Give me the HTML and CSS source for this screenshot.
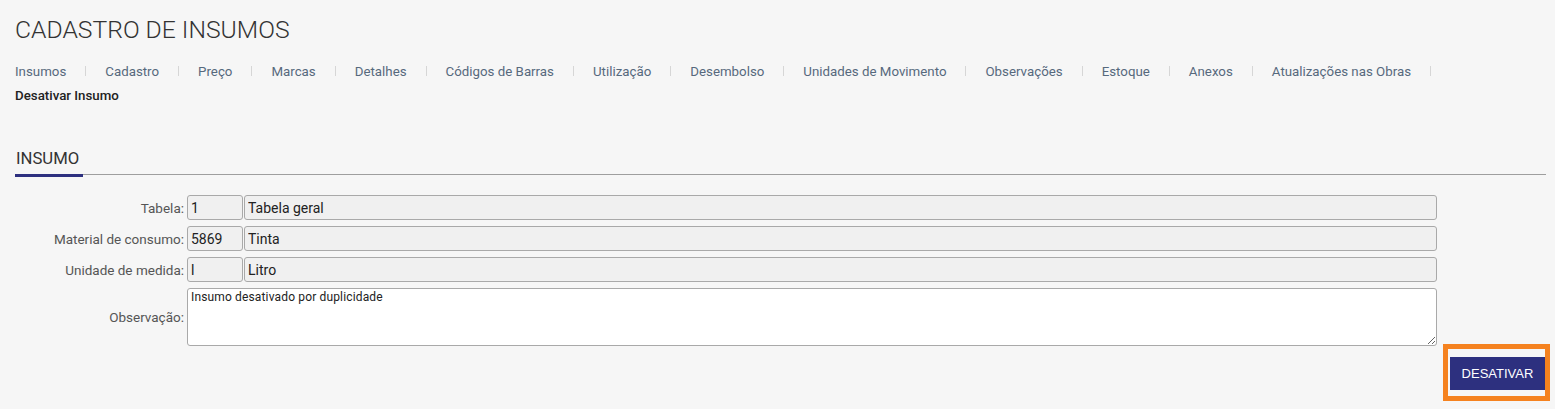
FILE: index.html
```html
<!DOCTYPE html>
<html lang="pt-BR">
<head>
<meta charset="utf-8">
<title>Cadastro de Insumos</title>
<link rel="stylesheet" href="styles.css">
</head>
<body>
<div class="page">
  <h1 class="title">CADASTRO DE INSUMOS</h1>
  <nav class="nav">
    <a class="nav-item">Insumos</a>
    <a class="nav-item">Cadastro</a>
    <a class="nav-item">Preço</a>
    <a class="nav-item">Marcas</a>
    <a class="nav-item">Detalhes</a>
    <a class="nav-item">Códigos de Barras</a>
    <a class="nav-item">Utilização</a>
    <a class="nav-item">Desembolso</a>
    <a class="nav-item">Unidades de Movimento</a>
    <a class="nav-item">Observações</a>
    <a class="nav-item">Estoque</a>
    <a class="nav-item">Anexos</a>
    <a class="nav-item">Atualizações nas Obras</a>
    <a class="nav-item active">Desativar Insumo</a>
  </nav>

  <div class="tabs">
    <div class="tab">INSUMO</div>
  </div>

  <form class="form">
    <label class="label">Tabela:</label>
    <div class="field">
      <input class="input code" value="1" readonly>
      <input class="input desc" value="Tabela geral" readonly>
    </div>

    <label class="label">Material de consumo:</label>
    <div class="field">
      <input class="input code" value="5869" readonly>
      <input class="input desc" value="Tinta" readonly>
    </div>

    <label class="label">Unidade de medida:</label>
    <div class="field">
      <input class="input code" value="l" readonly>
      <input class="input desc" value="Litro" readonly>
    </div>

    <label class="label">Observação:</label>
    <div class="field">
      <textarea class="textarea">Insumo desativado por duplicidade</textarea>
    </div>
  </form>

  <div class="actions">
    <div class="btn-wrap">
      <button class="btn" type="button">DESATIVAR</button>
    </div>
  </div>
</div>
</body>
</html>
```

FILE: styles.css
```css
html, body {
  margin: 0;
  padding: 0;
  background: #f6f6f6;
}

body {
  font-family: Roboto, "Liberation Sans", Arial, sans-serif;
  color: #333;
}

.page {
  padding: 16px 9px 0 15px;
}

.title {
  margin: 0;
  font-size: 24.7px;
  font-weight: 300;
  line-height: 28px;
  color: #333;
}

.nav {
  margin-top: 15px;
  display: flex;
  flex-wrap: wrap;
}

.nav-item {
  display: flex;
  align-items: center;
  height: 24px;
  font-size: 13.3px;
  color: #56697d;
  text-decoration: none;
  white-space: nowrap;
}

.nav-item::after {
  content: "";
  display: inline-block;
  width: 1px;
  height: 10px;
  margin: 0 19px;
  background: #d6d6d6;
}

.nav-item.active {
  color: #222;
  font-weight: 500;
}

.nav-item:last-child::after {
  display: none;
}

.tabs {
  margin-top: 42px;
  display: flex;
  border-bottom: 1px solid #9e9e9e;
}

.tab {
  font-size: 16.7px;
  line-height: 19px;
  color: #333;
  padding: 0 4px 6px 1px;
  border-bottom: 3px solid #2d307f;
  margin-bottom: -3px;
}

.form {
  margin-top: 20px;
  display: grid;
  grid-template-columns: 172px 1250px;
  row-gap: 6px;
  align-items: center;
}

.label {
  font-size: 13.5px;
  color: #555;
  text-align: right;
  padding-right: 3px;
  white-space: nowrap;
}

.field {
  display: flex;
  gap: 1px;
}

.input {
  box-sizing: border-box;
  height: 25px;
  margin: 0;
  padding: 0 3px;
  border: 1px solid #a9a9a9;
  border-radius: 3px;
  background: #f0f0f0;
  font-family: Roboto, "Liberation Sans", Arial, sans-serif;
  font-size: 14px;
  color: #222;
  outline: none;
}

.input.code {
  width: 56px;
  flex: none;
}

.input.desc {
  flex: 1;
  min-width: 0;
}

.textarea {
  box-sizing: border-box;
  display: block;
  width: 100%;
  height: 58px;
  margin: 0;
  padding: 1px 3px;
  border: 1px solid #a9a9a9;
  border-radius: 3px;
  background: #fff;
  font-family: Roboto, "Liberation Sans", Arial, sans-serif;
  font-size: 12px;
  letter-spacing: 0.15px;
  color: #222;
  resize: both;
  outline: none;
}

.actions {
  margin-top: -2px;
  margin-right: -4px;
  display: flex;
  justify-content: flex-end;
}

.btn-wrap {
  display: flex;
  padding: 8px 0 6px 2px;
  border: 5px solid #f5821f;
}

.btn {
  box-sizing: border-box;
  width: 95px;
  height: 33px;
  margin: 0;
  padding: 0;
  border: none;
  background: #2d307f;
  color: #fff;
  font-family: "Liberation Sans", Arial, sans-serif;
  font-size: 13px;
}
```
